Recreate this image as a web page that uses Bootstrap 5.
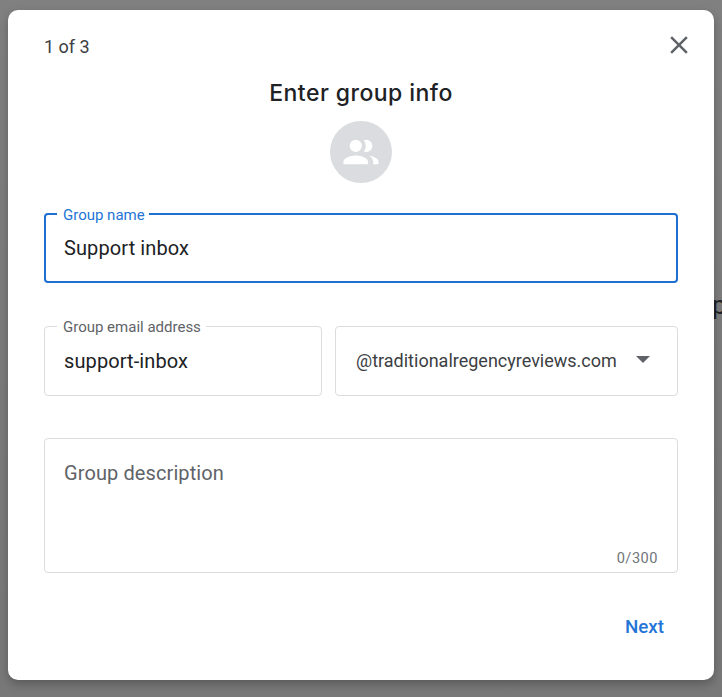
<!DOCTYPE html>
<html lang="en">
<head>
<meta charset="utf-8">
<title>Enter group info</title>
<link href="https://cdn.jsdelivr.net/npm/bootstrap@5.3.0/dist/css/bootstrap.min.css" rel="stylesheet">
<style>
html,body{height:100%;}
body{background:linear-gradient(#808080,#787878);font-family:Roboto,"Liberation Sans",sans-serif;color:#202124;overflow:hidden;position:relative;}
.stage{padding:10px 8px 17px;height:697px;position:relative;z-index:1;}
.sheet{width:706px;height:670px;background:#fff;border-radius:10px;padding:0 36px;box-shadow:0 4px 10px rgba(0,0,0,.25);}
.step-row{height:71px;padding-top:25px;}
.step-text{font-size:18px;line-height:24px;color:#3c4043;}
.close-x{width:30px;height:30px;margin:-5px -16px 0 0;padding:0;border:0;background:none;color:#5f6368;}
.sheet-title{font-family:Inter,"Open Sans",sans-serif;font-size:23px;line-height:24px;font-weight:500;color:#202124;letter-spacing:.45px;margin:0;height:40px;}
.avatar{width:62px;height:62px;border-radius:50%;background:#dadce0;color:#fff;}
.field{position:relative;border:1px solid #dadce0;border-radius:4px;font-size:20px;line-height:24px;letter-spacing:.1px;padding:0 19px;background:#fff;color:#202124;}
.field-focus{height:70px;margin-top:30px;border:2px solid #1f6fd0;padding:0 18px;}
.field-half{height:70px;}
.name-w{width:278px;}
.domain-w{width:343px;}
.float-label{position:absolute;top:-9px;left:12px;padding:0 5px 0 6px;background:#fff;font-size:15px;line-height:18px;letter-spacing:0;color:#5f6368;}
.field-focus .float-label{top:-9px;left:11px;padding:0 4px 0 6px;color:#2475d6;}
.row-email{margin-top:43px;}
.domain-text{font-size:18px;letter-spacing:0;margin-left:1px;color:#3c4043;}
.caret-d{width:0;height:0;border-left:7px solid transparent;border-right:7px solid transparent;border-top:7px solid #5f6368;margin-right:8px;margin-top:-3px;}
.field-desc{height:135px;margin-top:42px;padding-top:22px;color:#5f6368;}
.counter{position:absolute;right:19px;bottom:5px;font-size:14.6px;line-height:18px;letter-spacing:.5px;color:#70757a;}
.foot{margin-top:42px;padding-right:14px;}
.next-btn{font-size:18.8px;line-height:24px;font-weight:500;color:#2475d6;padding:0;border:0;background:none;}
.peek{position:absolute;left:712px;top:290px;font-size:26px;line-height:30px;color:#202124;z-index:0;}
</style>
</head>
<body>
<div class="peek">p</div>
<div class="stage">
  <div class="sheet">
    <div class="step-row d-flex justify-content-between align-items-start">
      <div class="step-text">1 of 3</div>
      <button type="button" class="close-x d-flex align-items-center justify-content-center" aria-label="Close">
        <svg width="30" height="30" viewBox="0 0 24 24" fill="currentColor"><path d="M19 6.41L17.59 5 12 10.59 6.41 5 5 6.41 10.59 12 5 17.59 6.41 19 12 13.41 17.59 19 19 17.59 13.41 12z"/></svg>
      </button>
    </div>
    <h1 class="sheet-title text-center">Enter group info</h1>
    <div class="d-flex justify-content-center">
      <div class="avatar d-flex align-items-center justify-content-center">
        <svg width="42" height="42" viewBox="0 0 24 24" fill="currentColor"><path d="M9 12a3.5 3.5 0 1 0 0-7 3.5 3.5 0 0 0 0 7zM9 14c-2.34 0-7 1.17-7 3.5V19h14v-1.5c0-2.33-4.66-3.5-7-3.5zM15 12a3.5 3.5 0 0 0 0-7c-.5 0-1 .1-1.4.3a5.5 5.5 0 0 1 0 6.4c.4.2.9.3 1.4.3zM16.7 14.1c1.3.9 2.3 2 2.3 3.4V19h3v-1.5c0-1.9-3-3-5.3-3.4z"/></svg>
      </div>
    </div>
    <div class="field field-focus d-flex align-items-center">
      <span class="float-label">Group name</span>
      <span>Support inbox</span>
    </div>
    <div class="row-email d-flex justify-content-between">
      <div class="field field-half name-w d-flex align-items-center">
        <span class="float-label">Group email address</span>
        <span>support-inbox</span>
      </div>
      <div class="field field-half domain-w d-flex align-items-center justify-content-between">
        <span class="domain-text">@traditionalregencyreviews.com</span>
        <span class="caret-d"></span>
      </div>
    </div>
    <div class="field field-desc">
      Group description
      <span class="counter">0/300</span>
    </div>
    <div class="foot d-flex justify-content-end">
      <button type="button" class="next-btn">Next</button>
    </div>
  </div>
</div>
<script src="https://cdn.jsdelivr.net/npm/bootstrap@5.3.0/dist/js/bootstrap.bundle.min.js"></script>
</body>
</html>
